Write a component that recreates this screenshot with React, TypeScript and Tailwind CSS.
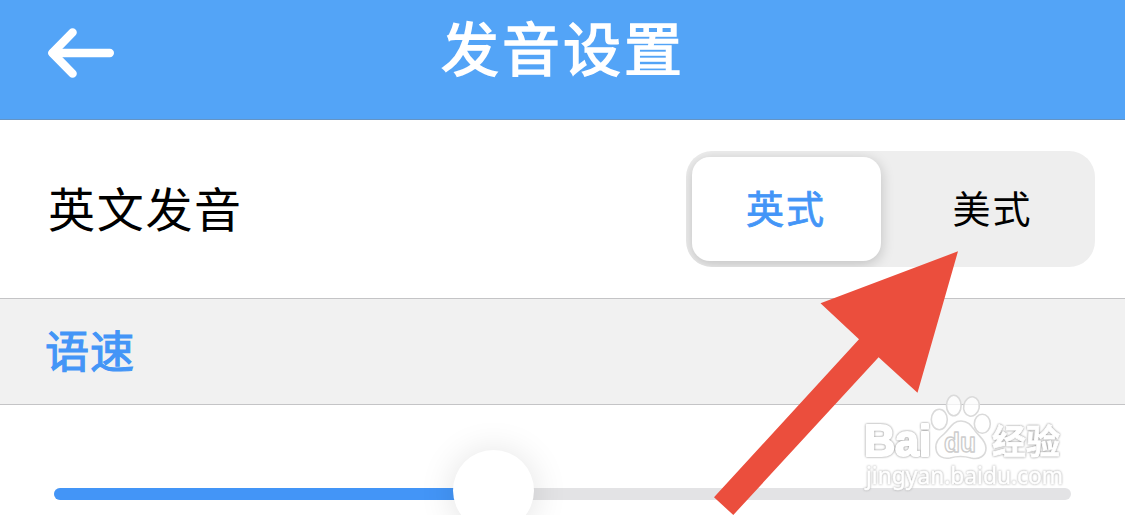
import React, { useState } from 'react';

type Accent = 'british' | 'american';

interface AccentOption {
  id: Accent;
  label: string;
}

const accents: AccentOption[] = [
  { id: 'british', label: '英式' },
  { id: 'american', label: '美式' },
];

const BackIcon: React.FC = () => (
  <svg width="68" height="52" viewBox="0 0 68 52" fill="none" stroke="#fff" strokeWidth="8.4" strokeLinecap="round" strokeLinejoin="round">
    <path d="M62.8 26H6" />
    <path d="M25.6 5.4L5.4 26L25.6 46.6" />
  </svg>
);

// Red pointer towards the American option
const Pointer: React.FC = () => (
  <svg className="absolute left-[700px] top-[240px] pointer-events-none" width="280" height="275" viewBox="0 0 280 275">
    <path d="M258 11.3L120.5 63.3L159 99.3L14 257.3L33.3 275L178.6 117.2L217.5 152.8Z" fill="#eb4e3d" />
  </svg>
);

const Watermark: React.FC = () => (
  <svg className="absolute left-[850px] top-[380px] pointer-events-none" width="230" height="125" viewBox="0 0 230 125">
    <g fill="#fff" fillOpacity="0.75" stroke="#dadada" strokeWidth="1.6" strokeLinejoin="round">
      <ellipse cx="89.3" cy="39.5" rx="8" ry="10.3" />
      <ellipse cx="103.8" cy="25.5" rx="7.3" ry="10.3" />
      <ellipse cx="121.5" cy="26.5" rx="7.8" ry="9.8" transform="rotate(12 121.5 26.5)" />
      <ellipse cx="132.3" cy="43.7" rx="8" ry="9.5" />
      <path d="M111 41C102 41 100 49 94 54C89 58 85 62 86 69C87 77 94 79 100 78C107 76 114 76 121 78C129 80 136 76 136 68C136 61 130 57 126 52C122 47 119 41 111 41Z" />
      <text x="94" y="72" fontSize="27" fontFamily='"Liberation Sans", Arial, sans-serif' fontWeight="700" textLength="32" lengthAdjust="spacingAndGlyphs" stroke="#cdcdcd" strokeWidth="1.4">du</text>
    </g>
    {/* White lettering with a soft grey rim */}
    <g className="drop-shadow-[0_0_1px_#858585]" fill="#fff" stroke="#fff" strokeLinejoin="round">
      <text x="14" y="76" fontSize="44" fontFamily='"Liberation Sans", Arial, sans-serif' fontWeight="700" strokeWidth="2.2" textLength="67" lengthAdjust="spacingAndGlyphs">Bai</text>
      <text x="142" y="73.5" fontSize="34" fontFamily='"Noto Sans CJK SC", sans-serif' fontWeight="700" strokeWidth="0.8" textLength="68">经验</text>
    </g>
    <g className="drop-shadow-[0_0_1px_#a0a0a0]" fill="#fff" stroke="#fff" strokeWidth="0.5">
      <text x="16" y="104" fontSize="23" fontFamily='"Noto Sans", sans-serif' textLength="197" lengthAdjust="spacingAndGlyphs">jingyan.baidu.com</text>
    </g>
  </svg>
);

const App: React.FC = () => {
  const [accent, setAccent] = useState<Accent>('british');
  const [speed] = useState(43.2);

  return (
    <div className='relative w-[1125px] h-[515px] overflow-hidden bg-white font-["Noto_Sans_CJK_SC",sans-serif]'>
      {/* Header */}
      <header className="grid grid-cols-[1fr_auto_1fr] items-start h-[120px] px-[47px] bg-[#53a4f7] border-b border-[#6594c4]">
        <button aria-label="返回" className="mt-[27px] justify-self-start">
          <BackIcon />
        </button>
        <h1 className="mt-[6px] pl-px text-[58px] leading-[80px] tracking-[3px] text-white [-webkit-text-stroke:1.5px_#fff]">发音设置</h1>
      </header>

      {/* Accent */}
      <div className="flex items-center justify-between h-[178px] pl-[48px] pr-[30px]">
        <span className="pb-[5px] text-[47px] leading-[60px] tracking-[1.7px] text-black">英文发音</span>
        <div className="flex w-[409px] h-[116px] p-[6px] rounded-[26px] bg-[#eeeeee] overflow-hidden">
          {accents.map(option => (
            <button
              key={option.id}
              className={`h-[104px] pb-[6px] rounded-[18px] text-[38px] tracking-[2px] ${
                accent === option.id
                  ? 'w-[189px] pr-[1px] bg-white text-[#4395f7] [-webkit-text-stroke:0.8px_#4395f7] shadow-[0_3px_14px_rgba(0,0,0,0.2)]'
                  : 'flex-1 pl-[15px] text-black'
              }`}
              onClick={() => setAccent(option.id)}
            >
              {option.label}
            </button>
          ))}
        </div>
      </div>

      {/* Speed */}
      <div className="flex items-center h-[107px] pl-[45px] pb-[6px] bg-[#f1f1f1] border-y border-[#c4c4c6]">
        <h2 className="text-[44px] leading-[60px] tracking-[1px] text-[#4395f7] [-webkit-text-stroke:1.2px_#4395f7]">语速</h2>
      </div>
      <div className="px-[54px] pt-[83px]">
        <div className="relative h-3 rounded-full bg-[#e3e3e5]">
          <div className="h-3 rounded-full bg-[#4395f7]" style={{ width: `${speed}%` }} />
          <div
            className="absolute -top-[38px] -ml-[40.5px] size-[81px] rounded-full bg-white shadow-[0_2px_36px_rgba(0,0,0,0.12)]"
            style={{ left: `${speed}%` }}
          />
        </div>
      </div>

      <Watermark />
      <Pointer />
    </div>
  );
};

export default App;
